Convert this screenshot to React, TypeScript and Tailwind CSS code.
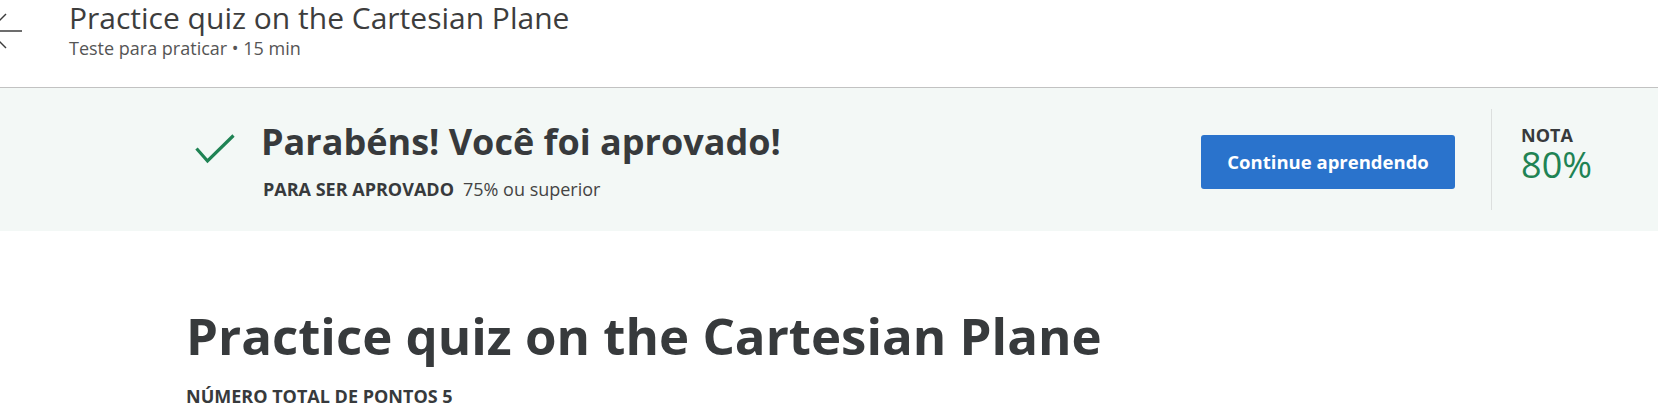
import type { FC } from "react";

const BackArrow: FC = () => (
  <svg width="36" height="36" viewBox="0 0 36 36" className="ml-[-12px] mt-[13px] shrink-0" fill="none" stroke="#3c3c3c" strokeWidth="1.4">
    <path d="M1 18 H34" />
    <path d="M1 18 L18 1" />
    <path d="M1 18 L18 35" />
  </svg>
);

const Header: FC = () => (
  <header className="flex h-[88px] border-b border-[#c2c2c2]">
    <BackArrow />
    <div className="ml-[45px] flex flex-col">
      <h1 className="text-[30px] leading-[36px] text-[#3d3d3d]">Practice quiz on the Cartesian Plane</h1>
      <p className="mt-[1px] text-[18px] leading-[22px] text-[#555]">Teste para praticar • 15 min</p>
    </div>
  </header>
);

const PassedBanner: FC = () => (
  <section className="flex h-[143px] bg-[#f3f8f6]">
    <div className="flex flex-1 pl-[195px] pt-[32px]">
      <svg width="40" height="30" viewBox="0 0 40 30" className="mt-[14px] shrink-0" fill="none" stroke="#1f8354" strokeWidth="3.2">
        <path d="M1.5 14.5 L12.5 27 L38.5 1.5" />
      </svg>
      <div className="ml-[26px] flex flex-col">
        <h2 className="text-[36px] leading-[44px] font-bold text-[#373a3c]">Parabéns! Você foi aprovado!</h2>
        <p className="mt-[14px] text-[18px] leading-[22px] text-[#444] pl-[2px]">
          <span className="font-bold uppercase text-[#373a3c]">Para ser aprovado</span>
          <span className="ml-[9px]">75% ou superior</span>
        </p>
      </div>
    </div>
    <div className="pt-[47px]">
      <button className="h-[54px] w-[254px] rounded-[3px] bg-[#2a73cc] text-[18.5px] font-bold text-white">
        Continue aprendendo
      </button>
    </div>
    <div className="ml-[36px] mt-[21px] h-[101px] w-px bg-[#dcdfde]" />
    <div className="ml-[29px] mr-[66px] flex flex-col pt-[35px]">
      <span className="text-[18px] leading-[24px] font-bold uppercase text-[#373a3c]">Nota</span>
      <span className="text-[36px] leading-[36px] text-[#1f8354]">80%</span>
    </div>
  </section>
);

export default function App() {
  return (
    <div className="min-h-[419px] w-full bg-white font-['Open_Sans',sans-serif]">
      <Header />
      <PassedBanner />
      <main className="pl-[186px] pt-[72px]">
        <h1 className="text-[51px] leading-[64px] font-bold text-[#373a3c]">Practice quiz on the Cartesian Plane</h1>
        <p className="mt-[17px] text-[18px] leading-[24px] font-bold uppercase text-[#373a3c]">Número total de pontos 5</p>
      </main>
    </div>
  );
}
